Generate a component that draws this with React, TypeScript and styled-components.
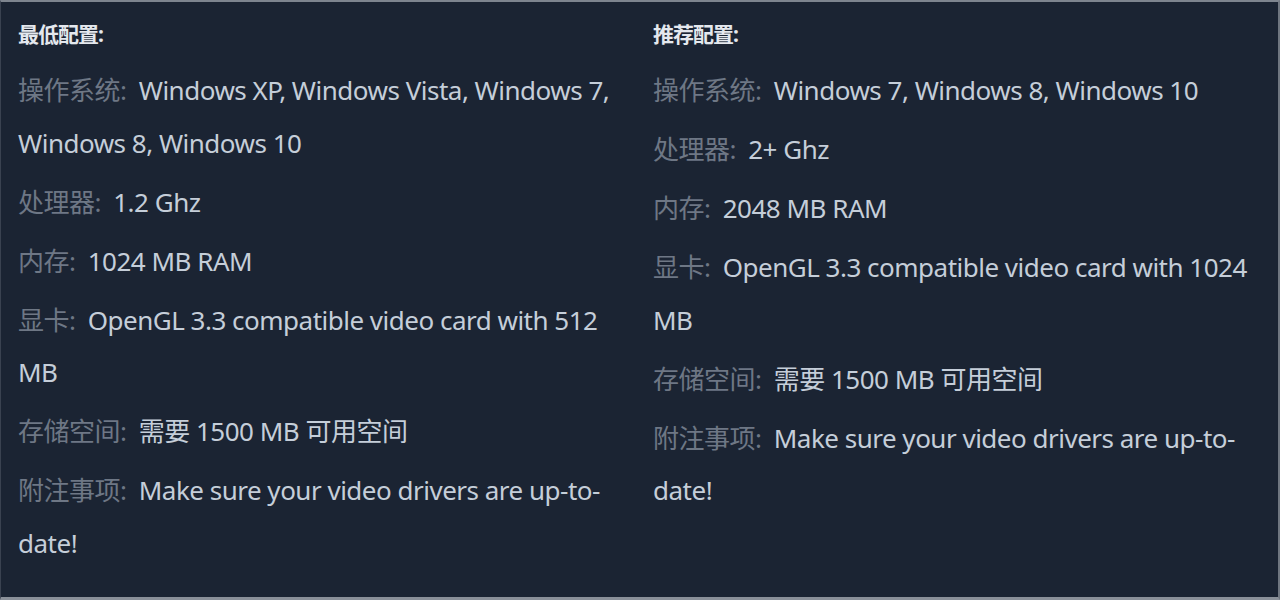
import React from "react";
import styled, { createGlobalStyle } from "styled-components";

const GlobalStyle = createGlobalStyle`
  html, body {
    margin: 0;
    padding: 0;
    background: #1b2433;
  }
`;

type Row = { label: string; value: string };

const minimum: Row[] = [
  { label: "操作系统:", value: "Windows XP, Windows Vista, Windows 7, Windows 8, Windows 10" },
  { label: "处理器:", value: "1.2 Ghz" },
  { label: "内存:", value: "1024 MB RAM" },
  { label: "显卡:", value: "OpenGL 3.3 compatible video card with 512 MB" },
  { label: "存储空间:", value: "需要 1500 MB 可用空间" },
  { label: "附注事项:", value: "Make sure your video drivers are up-to-date!" },
];

const recommended: Row[] = [
  { label: "操作系统:", value: "Windows 7, Windows 8, Windows 10" },
  { label: "处理器:", value: "2+ Ghz" },
  { label: "内存:", value: "2048 MB RAM" },
  { label: "显卡:", value: "OpenGL 3.3 compatible video card with 1024 MB" },
  { label: "存储空间:", value: "需要 1500 MB 可用空间" },
  { label: "附注事项:", value: "Make sure your video drivers are up-to-date!" },
];

function RequirementColumn({ title, rows }: { title: string; rows: Row[] }) {
  return (
    <Column>
      <Title>{title}</Title>
      <List>
        {rows.map((r) => (
          <Item key={r.label}>
            <Label>{r.label}</Label> {r.value}
          </Item>
        ))}
      </List>
    </Column>
  );
}

export default function App() {
  return (
    <>
      <GlobalStyle />
      <Panel>
        <RequirementColumn title="最低配置:" rows={minimum} />
        <RequirementColumn title="推荐配置:" rows={recommended} />
      </Panel>
    </>
  );
}

const Panel = styled.div`
  box-sizing: border-box;
  width: 1280px;
  height: 600px;
  background: #1b2433;
  border-top: 2px solid #7e858f;
  border-right: 2px solid #6f7680;
  border-bottom: 3px solid #8a9099;
  border-left: 1px solid #3a4250;
  padding: 16px 24px 0 17px;
  display: grid;
  grid-template-columns: 600px 600px;
  column-gap: 35px;
  font-family: "Noto Sans", "Noto Sans CJK SC", sans-serif;
`;

const Column = styled.div`
  display: flex;
  flex-direction: column;
`;

const Title = styled.div`
  color: #e4e8ee;
  font-size: 21px;
  font-weight: 700;
  letter-spacing: -1px;
  line-height: 32px;
  margin-bottom: 14px;
`;

const List = styled.ul`
  list-style: none;
  margin: 0;
  padding: 0;
`;

const Item = styled.li`
  color: #c5ced9;
  font-size: 26px;
  line-height: 52.5px;
  margin-bottom: 6.5px;
  letter-spacing: -0.5px;
`;

const Label = styled.span`
  color: #6e7785;
  font-weight: 400;
  margin-right: 6px;
`;
